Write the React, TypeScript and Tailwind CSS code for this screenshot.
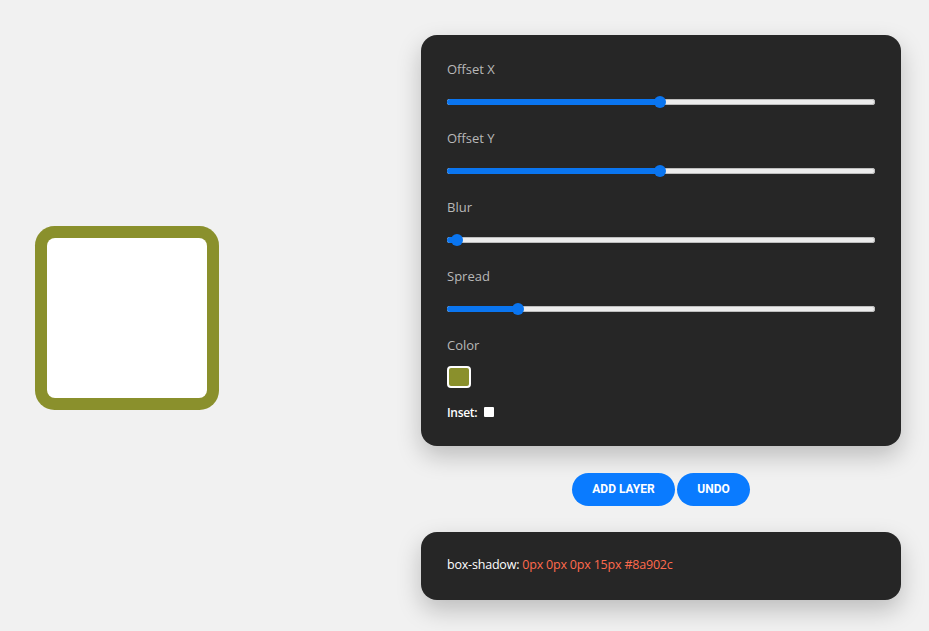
import React from "react";

const sliders = [
  { label: "Offset X", pct: 0.5 },
  { label: "Offset Y", pct: 0.5 },
  { label: "Blur", pct: 0 },
  { label: "Spread", pct: 0.15 },
];

const Slider = ({ pct }: { pct: number }) => {
  // thumb travels from 10px to 416px across the 428px track
  const x = 10 + pct * 406;
  return (
    <div className="relative h-[12px] w-full">
      <div className="absolute left-0 right-0 top-[3px] h-[6px] rounded-full bg-[#ececec] shadow-[inset_0_0_0_1px_#bdbdbd]" />
      <div
        className="absolute left-0 top-[3px] h-[6px] rounded-full bg-[#0a75f0]"
        style={{ width: x + 4 }}
      />
      <div
        className="absolute top-0 h-[12px] w-[12px] rounded-full bg-[#0a75f0]"
        style={{ left: x - 6 }}
      />
    </div>
  );
};

export default function App() {
  return (
    <div className="flex h-[631px] w-[929px] items-center bg-[#f1f1f1] pl-[47px] pt-[5px] font-['Open_Sans',sans-serif]">
      <div className="h-[160px] w-[160px] shrink-0 rounded-[8px] bg-white shadow-[0_0_0_12px_#8a902c]" />

      <div className="mb-[2px] ml-[214px] flex w-[480px] flex-col items-center">
        <div className="w-full rounded-[16px] bg-[#262626] px-[26px] pb-[25px] pt-[26px] shadow-[0_10px_24px_rgba(0,0,0,0.22)]">
          {sliders.map((s) => (
            <div key={s.label} className="mb-[22px] flex flex-col">
              <div className="flex h-[18px] items-center text-[13px] text-[#b8b8b8]">
                {s.label}
              </div>
              <div className="mt-[17px]">
                <Slider pct={s.pct} />
              </div>
            </div>
          ))}
          <div className="mt-[1px] flex h-[18px] items-center text-[13px] text-[#b8b8b8]">
            Color
          </div>
          <div className="mt-[11px] h-[22px] w-[24px] rounded-[4px] border-2 border-white bg-[#8a902c]" />
          <div className="mt-[17px] flex h-[16px] items-center gap-[7px] text-[12px] font-semibold text-white">
            <span className="tracking-[-0.3px]">Inset:</span>
            <span className="mb-[1px] h-[10px] w-[10px] rounded-[1px] bg-white" />
          </div>
        </div>

        <div className="mt-[27px] flex gap-[2px] font-['Roboto',sans-serif]">
          <button className="h-[33px] w-[103px] rounded-full bg-[#0a7bff] text-[12px] font-bold text-white">
            ADD LAYER
          </button>
          <button className="h-[33px] w-[73px] rounded-full bg-[#0a7bff] text-[12px] font-bold text-white">
            UNDO
          </button>
        </div>

        <div className="mt-[26px] flex h-[68px] w-full items-center rounded-[16px] bg-[#262626] px-[26px] text-[12.5px] tracking-[-0.2px] shadow-[0_10px_24px_rgba(0,0,0,0.22)]">
          <span className="text-white">box-shadow:&nbsp;</span>
          <span className="text-[#ff6a4d]">0px 0px 0px 15px #8a902c</span>
        </div>
      </div>
    </div>
  );
}
